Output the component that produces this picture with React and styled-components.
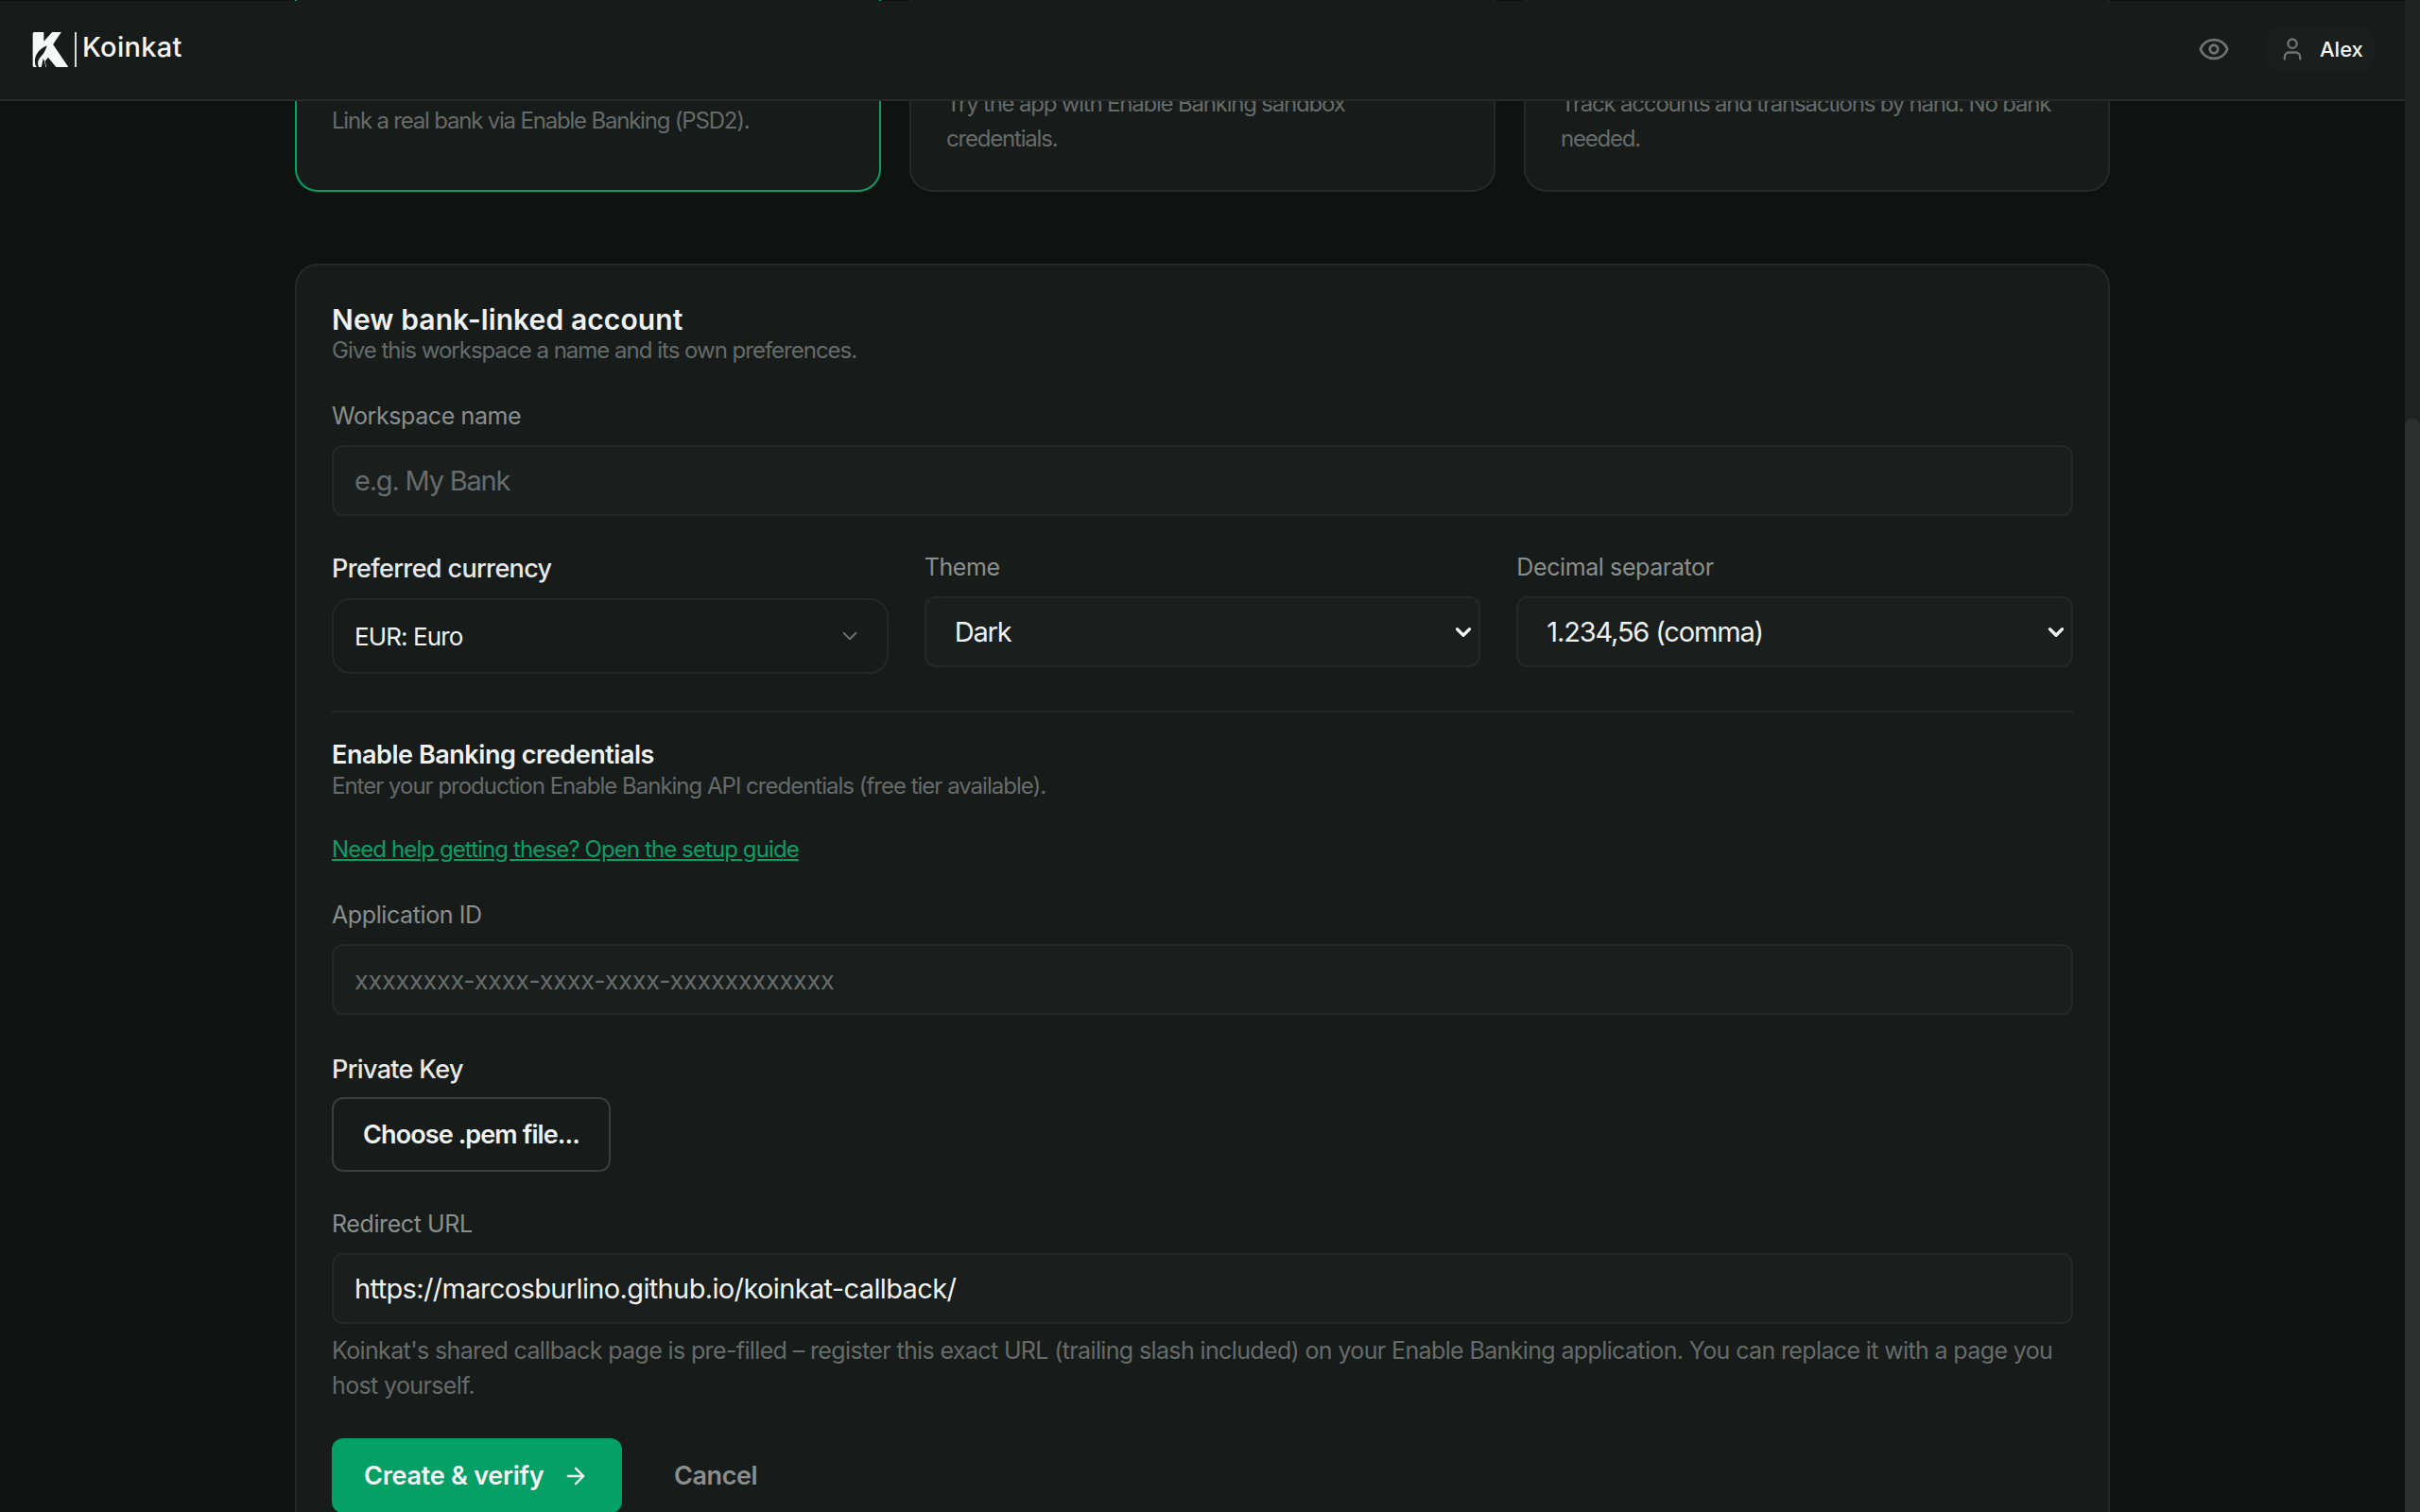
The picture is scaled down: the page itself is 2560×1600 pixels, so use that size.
import React from 'react';
import styled, { createGlobalStyle } from 'styled-components';
import { ArrowRight, ChevronDown, Eye, User } from 'lucide-react';

const font = '"Inter", "Liberation Sans", sans-serif';

const GlobalStyle = createGlobalStyle`
  html, body {
    margin: 0;
    height: 100%;
    overflow: hidden;
    background: #0e1312;
    font-family: ${font};
    color: #f0f2f1;
  }
  * {
    box-sizing: border-box;
  }
`;

const Page = styled.div`
  display: flex;
  height: 1600px;
`;

const Main = styled.main`
  position: relative;
  flex: 1;
  overflow: hidden;
`;

const ScrollTrack = styled.div`
  display: flex;
  width: 16px;
  padding-top: 443px;
  background: #1e2322;
`;

const ScrollThumb = styled.div`
  flex: 1;
  border-radius: 8px 8px 0 0;
  background: #2b302e;
`;

const Header = styled.header`
  position: absolute;
  top: 1px;
  left: 0;
  right: 0;
  z-index: 2;
  display: flex;
  align-items: center;
  justify-content: space-between;
  height: 106px;
  padding: 0 31px 2px 34px;
  background: #171c1b;
  border-bottom: 2px solid #262b2a;
`;

const Brand = styled.div`
  display: flex;
  align-items: center;
`;

const BrandDivider = styled.span`
  width: 2px;
  height: 37px;
  margin: 0 6px 0 6px;
  background: #d8dbda;
`;

const BrandName = styled.span`
  margin-bottom: 5px;
  font-size: 29px;
  font-weight: 500;
  letter-spacing: 0.3px;
  color: #f4f5f5;
`;

const HeaderActions = styled.div`
  display: flex;
  align-items: center;
  gap: 38px;
`;

const IconButton = styled.button`
  display: flex;
  padding: 0;
  border: none;
  background: none;
  color: #6f7472;
`;

const UserChip = styled.div`
  display: flex;
  align-items: center;
  gap: 15px;
  width: 116px;
  height: 44px;
  padding-left: 14px;
  border-radius: 14px;
  background: #1a1f1e;
  color: #6f7472;
`;

const UserName = styled.span`
  font-size: 22px;
  font-weight: 500;
  color: #f4f5f5;
`;

const Content = styled.div`
  width: 1920px;
  margin: -30px auto 0;
`;

const OptionRow = styled.div`
  display: grid;
  grid-template-columns: repeat(3, 1fr);
  gap: 30px;
  margin-bottom: 76px;
`;

const OptionCard = styled.div`
  padding: 118px 37px 36px;
  border: 2px solid ${({ $selected }) => ($selected ? '#0a9e65' : '#252a29')};
  border-radius: 24px;
  background: #171c1b;
`;

const OptionText = styled.div`
  display: flex;
  align-items: center;
  height: 75px;
  font-size: 24px;
  line-height: 37px;
  letter-spacing: -1.2px;
  color: #666b69;
`;

const FormCard = styled.section`
  padding: 40px 37px 60px;
  border: 2px solid #252a29;
  border-radius: 24px;
  background: #171c1b;
`;

const CardTitle = styled.h2`
  margin: -1px 0 1px;
  font-size: 30px;
  line-height: 36px;
  font-weight: 600;
  letter-spacing: 0.1px;
  color: #f0f2f1;
`;

const SectionTitle = styled.h3`
  margin: 26px 0 0;
  font-size: 27px;
  line-height: 38px;
  font-weight: 600;
  letter-spacing: -0.45px;
  color: #f0f2f1;
`;

const Subtitle = styled.p`
  margin: 0;
  font-size: 24px;
  line-height: 28px;
  letter-spacing: -1px;
  color: #666b69;
`;

const HelpLink = styled.a`
  display: block;
  margin-top: 37px;
  font-size: 24px;
  line-height: 32px;
  letter-spacing: -0.9px;
  color: #0a9e65;
  text-decoration: underline;
`;

const Field = styled.div`
  margin-top: ${({ $top }) => $top || 38}px;
`;

const Label = styled.label`
  display: block;
  margin-bottom: 15px;
  font-size: ${({ $bright }) => ($bright ? 27 : 25)}px;
  line-height: 32px;
  font-weight: ${({ $bright }) => ($bright ? 500 : 400)};
  letter-spacing: ${({ $bright }) => ($bright ? -0.65 : -0.4)}px;
  color: ${({ $bright }) => ($bright ? '#e8eae9' : '#8a8f8d')};
`;

const Input = styled.input`
  display: block;
  width: 100%;
  height: 75px;
  padding: 0 22px;
  border: 2px solid #242928;
  border-radius: 12px;
  outline: none;
  background: #1a1f1e;
  font-family: ${font};
  font-size: 29px;
  letter-spacing: -0.64px;
  color: #f0f2f1;
  &::placeholder {
    color: #676c6a;
    opacity: 1;
    font-size: ${({ $small }) => ($small ? 27 : 29)}px;
    letter-spacing: ${({ $small }) => ($small ? -0.25 : -1.2)}px;
  }
`;

const SelectRow = styled.div`
  display: grid;
  grid-template-columns: repeat(3, 1fr);
  gap: 38px;
  margin-top: 38px;
`;

const SelectBox = styled.div`
  position: relative;
  color: ${({ $soft }) => ($soft ? '#6b706e' : '#f0f2f1')};
  svg {
    position: absolute;
    top: 50%;
    right: ${({ $soft }) => ($soft ? 28 : 5)}px;
    transform: translateY(-50%);
    pointer-events: none;
  }
`;

const Select = styled.select`
  display: block;
  width: 100%;
  height: ${({ $soft }) => ($soft ? 80 : 75)}px;
  padding: 0 ${({ $soft }) => ($soft ? 22 : 30)}px;
  appearance: none;
  border: 2px solid #242928;
  border-radius: ${({ $soft }) => ($soft ? 20 : 12)}px;
  outline: none;
  background: ${({ $soft }) => ($soft ? '#171c1b' : '#1a1f1e')};
  font-family: ${font};
  font-size: ${({ $soft }) => ($soft ? 26 : 29)}px;
  letter-spacing: ${({ $soft }) => ($soft ? -0.9 : -1.15)}px;
  color: #f0f2f1;
`;

const CurrencyField = styled.div`
  padding-top: 2px;
`;

const Divider = styled.hr`
  height: 2px;
  margin: 39px 0 0;
  border: none;
  background: #252a29;
`;

const FileButton = styled.button`
  display: block;
  width: 295px;
  height: 79px;
  margin-top: -2px;
  border: 2px solid #3a3f3d;
  border-radius: 12px;
  background: transparent;
  font-family: ${font};
  font-size: 27px;
  font-weight: 600;
  letter-spacing: -0.9px;
  color: #f0f2f1;
`;

const HelpText = styled.p`
  margin: 10px 0 0;
  font-size: 25px;
  line-height: 37px;
  letter-spacing: -0.63px;
  color: #666b69;
`;

const Actions = styled.div`
  display: flex;
  align-items: center;
  gap: 55px;
  margin-top: 37px;
`;

const PrimaryButton = styled.button`
  display: flex;
  align-items: center;
  gap: 20px;
  width: 307px;
  height: 79px;
  padding: 0 34px;
  border: none;
  border-radius: 12px;
  background: #05a066;
  font-family: ${font};
  font-size: 27px;
  font-weight: 600;
  letter-spacing: -0.25px;
  white-space: nowrap;
  color: #f4f5f5;
`;

const GhostButton = styled.button`
  padding: 0;
  border: none;
  background: none;
  font-family: ${font};
  font-size: 27px;
  font-weight: 600;
  letter-spacing: -0.4px;
  color: #8a8f8d;
`;

const Logo = () => (
  <svg width="39" height="39" viewBox="40 36 120 118" aria-hidden="true">
    <path
      fill="#f7f8f8"
      d="M47 38H78V68L105 38H135L108 78L158 152H118L92 120L82 133L86 152H47Q42 152 42 147V43Q42 38 47 38Z"
    />
    <path
      fill="#171c1b"
      d="M88 82C70 90 52 104 49 128C48 138 50 146 55 152H62C57 142 58 128 68 118C74 112 82 104 88 82ZM76 124L70 152H84L80 132Z"
    />
  </svg>
);

const App = () => (
  <>
    <GlobalStyle />
    <Page>
      <Main>
        <Header>
          <Brand>
            <Logo />
            <BrandDivider />
            <BrandName>Koinkat</BrandName>
          </Brand>
          <HeaderActions>
            <IconButton>
              <Eye size={34} strokeWidth={2} />
            </IconButton>
            <UserChip>
              <User size={28} strokeWidth={2} />
              <UserName>Alex</UserName>
            </UserChip>
          </HeaderActions>
        </Header>

        <Content>
          <OptionRow>
            <OptionCard $selected>
              <OptionText>Link a real bank via Enable Banking (PSD2).</OptionText>
            </OptionCard>
            <OptionCard>
              <OptionText>Try the app with Enable Banking sandbox credentials.</OptionText>
            </OptionCard>
            <OptionCard>
              <OptionText>Track accounts and transactions by hand. No bank needed.</OptionText>
            </OptionCard>
          </OptionRow>

          <FormCard>
            <CardTitle>New bank-linked account</CardTitle>
            <Subtitle>Give this workspace a name and its own preferences.</Subtitle>

            <Field $top={39}>
              <Label>Workspace name</Label>
              <Input placeholder="e.g. My Bank" />
            </Field>

            <SelectRow>
              <CurrencyField>
                <Label $bright>Preferred currency</Label>
                <SelectBox $soft>
                  <Select $soft defaultValue="EUR">
                    <option value="EUR">EUR: Euro</option>
                  </Select>
                  <ChevronDown size={26} strokeWidth={1.8} />
                </SelectBox>
              </CurrencyField>
              <div>
                <Label>Theme</Label>
                <SelectBox>
                  <Select defaultValue="dark">
                    <option value="dark">Dark</option>
                  </Select>
                  <ChevronDown size={26} strokeWidth={3} />
                </SelectBox>
              </div>
              <div>
                <Label>Decimal separator</Label>
                <SelectBox>
                  <Select defaultValue="comma">
                    <option value="comma">1.234,56 (comma)</option>
                  </Select>
                  <ChevronDown size={26} strokeWidth={3} />
                </SelectBox>
              </div>
            </SelectRow>

            <Divider />

            <SectionTitle>Enable Banking credentials</SectionTitle>
            <Subtitle>Enter your production Enable Banking API credentials (free tier available).</Subtitle>
            <HelpLink href="#">Need help getting these? Open the setup guide</HelpLink>

            <Field $top={37}>
              <Label>Application ID</Label>
              <Input $small placeholder="xxxxxxxx-xxxx-xxxx-xxxx-xxxxxxxxxxxx" />
            </Field>

            <Field $top={42}>
              <Label $bright>Private Key</Label>
              <FileButton>Choose .pem file...</FileButton>
            </Field>

            <Field $top={39}>
              <Label>Redirect URL</Label>
              <Input defaultValue="https://marcosburlino.github.io/koinkat-callback/" />
              <HelpText>
                Koinkat's shared callback page is pre-filled – register this exact URL (trailing slash included) on
                your Enable Banking application. You can replace it with a page you host yourself.
              </HelpText>
            </Field>

            <Actions>
              <PrimaryButton>
                Create &amp; verify
                <ArrowRight size={28} strokeWidth={2} />
              </PrimaryButton>
              <GhostButton>Cancel</GhostButton>
            </Actions>
          </FormCard>
        </Content>
      </Main>
      <ScrollTrack>
        <ScrollThumb />
      </ScrollTrack>
    </Page>
  </>
);

export default App;
